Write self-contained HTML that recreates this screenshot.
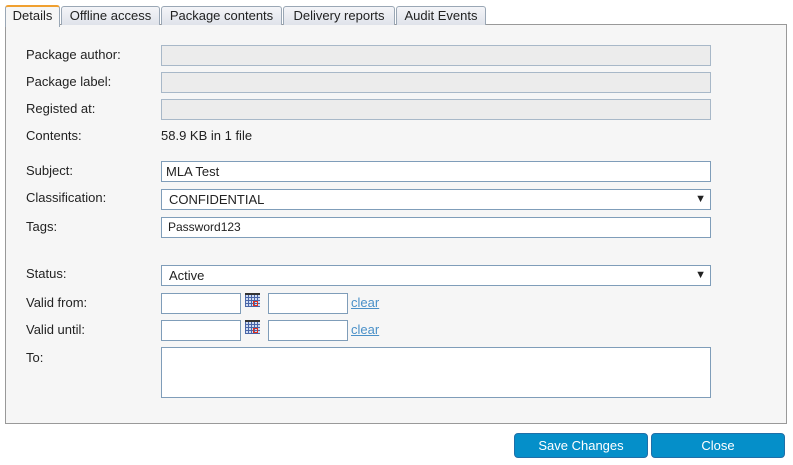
<!DOCTYPE html>
<html><head><style>
body{margin:0;width:793px;height:465px;background:#fff;font-family:"Liberation Sans","DejaVu Sans",sans-serif;font-size:13px;color:#222;position:relative;overflow:hidden}
.a{position:absolute}
.tab{position:absolute;top:6px;height:18px;border:1px solid #9aa7b5;border-bottom:none;border-radius:3px 3px 0 0;background:linear-gradient(#f4f5f8,#dfe3ea);line-height:18px;text-align:center;font-size:13px}
.panel{position:absolute;left:5px;top:24px;width:780px;height:398px;border:1px solid #999;background:#f6f6f6}
.lbl{position:absolute;left:26px}
.in{position:absolute;left:161px;width:548px;height:19px;border:1px solid #7f9db9;background:#fff;box-sizing:content-box}
.dis{background:#ececec;border-color:#a8b8c8}
.sel{line-height:19px;padding-left:7px;width:541px}
.sel:after{content:"▼";position:absolute;right:4px;top:0;font-size:11px}
.sm{position:absolute;width:78px;height:19px;border:1px solid #7f9db9;background:#fff}
.cal{position:absolute;width:15px;height:12px;background:repeating-linear-gradient(90deg,#4a66a8 0 1px,transparent 1px 3px),repeating-linear-gradient(0deg,#4a66a8 0 1px,#d0dcf2 1px 3px);border-top:2px solid #333}
.cal:after{content:"";position:absolute;left:8px;top:6px;width:3px;height:3px;border:1px solid #e03020}
.clr{position:absolute;color:#4a90c8;text-decoration:underline}
.btn{position:absolute;top:433px;height:23px;border:1px solid #1f6fa8;border-radius:4px;background:#058fc9;color:#fff;text-align:center;line-height:23px;font-size:13px}
</style></head><body>
<div class="panel"></div>
<div class="tab" style="left:5px;width:53px;background:#f6f6f6;border-top:2px solid #f0a030;top:5px;height:20px">Details</div>
<div class="tab" style="left:61px;width:97px">Offline access</div>
<div class="tab" style="left:161px;width:119px">Package contents</div>
<div class="tab" style="left:283px;width:110px">Delivery reports</div>
<div class="tab" style="left:396px;width:88px">Audit Events</div>

<div class="lbl" style="top:47px">Package author:</div><div class="in dis" style="top:45px"></div>
<div class="lbl" style="top:74px">Package label:</div><div class="in dis" style="top:72px"></div>
<div class="lbl" style="top:101px">Registed at:</div><div class="in dis" style="top:99px"></div>
<div class="lbl" style="top:128px">Contents:</div><div class="a" style="left:161px;top:128px">58.9 KB in 1 file</div>
<div class="lbl" style="top:163px">Subject:</div><div class="in" style="top:161px;line-height:19px;padding-left:4px;width:544px">MLA Test</div>
<div class="lbl" style="top:190px">Classification:</div><div class="in sel" style="top:189px">CONFIDENTIAL</div>
<div class="lbl" style="top:219px">Tags:</div><div class="in" style="top:217px;line-height:19px;padding-left:6px;width:542px;font-size:12px">Password123</div>
<div class="lbl" style="top:266px">Status:</div><div class="in sel" style="top:265px">Active</div>
<div class="lbl" style="top:295px">Valid from:</div>
<div class="sm" style="left:161px;top:293px"></div><div class="cal" style="left:245px;top:293px"></div><div class="sm" style="left:268px;top:293px"></div><div class="clr" style="left:351px;top:295px">clear</div>
<div class="lbl" style="top:322px">Valid until:</div>
<div class="sm" style="left:161px;top:320px"></div><div class="cal" style="left:245px;top:320px"></div><div class="sm" style="left:268px;top:320px"></div><div class="clr" style="left:351px;top:322px">clear</div>
<div class="lbl" style="top:350px">To:</div><div class="in" style="top:347px;height:49px"></div>
<div class="btn" style="left:514px;width:132px">Save Changes</div>
<div class="btn" style="left:651px;width:132px">Close</div>
</body></html>
